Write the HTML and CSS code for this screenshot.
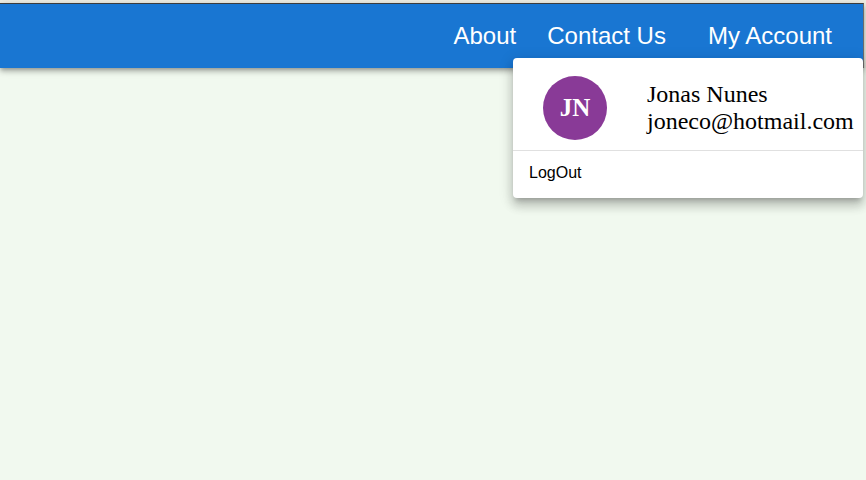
FILE: index.html
```html
<!DOCTYPE html>
<html lang="en">
<head>
<meta charset="utf-8">
<title>My Account</title>
<link rel="stylesheet" href="styles.css">
</head>
<body>
  <header class="frame">
    <nav class="appbar">
      <a class="nav-link nav-about">About</a>
      <a class="nav-link nav-contact">Contact Us</a>
      <a class="nav-link nav-account">My Account</a>
    </nav>
  </header>
  <main class="content"></main>
  <div class="menu">
    <div class="menu-profile">
      <div class="avatar">JN</div>
      <div class="profile-text">
        <div class="profile-name">Jonas Nunes</div>
        <div class="profile-email">joneco@hotmail.com</div>
      </div>
    </div>
    <div class="menu-divider"></div>
    <div class="menu-item">LogOut</div>
  </div>
</body>
</html>
```

FILE: styles.css
```css
html, body {
  margin: 0;
  padding: 0;
  height: 100%;
}

body {
  background: #f1f9ef;
  font-family: "Liberation Sans", Arial, sans-serif;
  position: relative;
  overflow: hidden;
}

.frame {
  background: #efeee3;
  padding: 3px 2px 0 0;
  position: relative;
  z-index: 2;
}

.appbar {
  height: 64px;
  background: #1976d2;
  border-top: 1px solid #3c3c3c;
  border-right: 1px solid #6b6b6b;
  display: flex;
  align-items: center;
  justify-content: flex-end;
  box-shadow: 0 2px 4px -1px rgba(0,0,0,0.25), 0 4px 5px 0 rgba(0,0,0,0.16), 0 1px 10px 0 rgba(0,0,0,0.12);
}

.nav-link {
  color: #ffffff;
  font-size: 24px;
  line-height: 28px;
  cursor: pointer;
  margin-top: -1px;
}

.nav-about { margin-right: 31px; }
.nav-contact { margin-right: 42px; }
.nav-account { margin-right: 31px; }

.content {
  height: 300px;
}

.menu {
  position: absolute;
  top: 58px;
  left: 513px;
  width: 350px;
  height: 140px;
  background: #ffffff;
  border-radius: 4px;
  box-shadow: 0 5px 5px -3px rgba(0,0,0,0.2), 0 8px 10px 1px rgba(0,0,0,0.14), 0 3px 14px 2px rgba(0,0,0,0.12);
  z-index: 5;
  display: flex;
  flex-direction: column;
}

.menu-profile {
  height: 92px;
  display: flex;
  align-items: flex-start;
  box-sizing: border-box;
  padding: 18px 0 0 30px;
}

.avatar {
  width: 64px;
  height: 64px;
  border-radius: 50%;
  background: #893a97;
  color: #ffffff;
  font-family: "Liberation Serif", "Times New Roman", serif;
  font-weight: bold;
  font-size: 25px;
  display: flex;
  align-items: center;
  justify-content: center;
  flex-shrink: 0;
}

.profile-text {
  margin-left: 40px;
  margin-top: 5px;
  font-family: "Liberation Serif", "Times New Roman", serif;
  font-size: 24px;
  line-height: 27px;
  color: #000000;
  white-space: nowrap;
}

.menu-divider {
  height: 1px;
  background: #e0e0e0;
}

.menu-item {
  padding: 10px 16px 13px;
  font-size: 16px;
  line-height: 24px;
  color: #000000;
}
```
